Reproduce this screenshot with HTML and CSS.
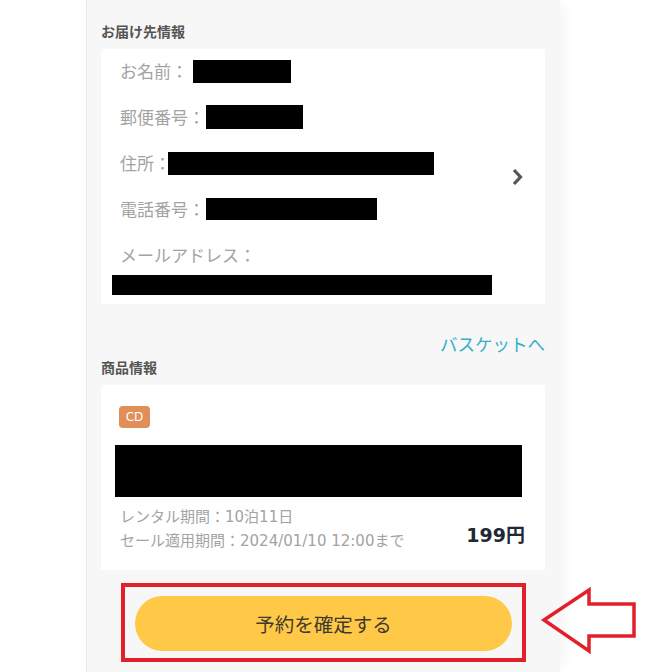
FILE: index.html
```html
<!DOCTYPE html>
<html lang="ja">
<head>
<meta charset="utf-8">
<link rel="stylesheet" href="styles.css">
</head>
<body>
<div class="page">
  <h2 class="section-title">お届け先情報</h2>
  <div class="card address-card">
    <div class="rows">
      <div class="row"><span class="label">お名前：</span><span class="mask mask-name"></span></div>
      <div class="row"><span class="label">郵便番号：</span><span class="mask mask-zip"></span></div>
      <div class="row"><span class="label">住所：</span><span class="mask mask-addr"></span></div>
      <div class="row"><span class="label">電話番号：</span><span class="mask mask-tel"></span></div>
      <div class="row"><span class="label">メールアドレス：</span></div>
      <div class="mask mask-mail"></div>
    </div>
    <svg class="chevron" width="11" height="18" viewBox="0 0 11 18"><path d="M2 2 L8.5 9 L2 16" fill="none" stroke="#555" stroke-width="3.2"/></svg>
  </div>
  <div class="basket-link-wrap"><a class="basket-link" href="#">バスケットへ</a></div>
  <h2 class="section-title title-goods">商品情報</h2>
  <div class="card goods-card">
    <span class="badge">CD</span>
    <div class="mask mask-title"></div>
    <div class="goods-foot">
      <div class="goods-meta">
        <div>レンタル期間：10泊11日</div>
        <div>セール適用期間：2024/01/10 12:00まで</div>
      </div>
      <div class="price">199円</div>
    </div>
  </div>
  <div class="confirm-box">
    <button class="confirm-btn">予約を確定する</button>
    <svg class="arrow" width="100" height="72" viewBox="0 0 100 72"><polygon points="4,36 49,6 49,20 94,20 94,52 49,52 49,67" fill="none" stroke="#e2202b" stroke-width="3.5" stroke-linejoin="miter"/></svg>
  </div>
</div>
</body>
</html>
```
FILE: styles.css
```css
html, body {
  margin: 0;
  padding: 0;
  background: #ffffff;
}
body {
  font-family: "Noto Sans CJK JP", "Noto Sans", sans-serif;
  overflow: hidden;
}
.page {
  box-sizing: border-box;
  margin-left: 86px;
  width: 474px;
  min-height: 672px;
  background: #f7f7f7;
  border-left: 1px solid #e9e9e9;
  padding: 0 15px 0 14px;
  box-shadow: 10px 0 10px -4px rgba(0, 0, 0, 0.035), -6px 0 8px -4px rgba(0, 0, 0, 0.02);
}
.section-title {
  margin: 0;
  padding-top: 22px;
  font-size: 14px;
  line-height: 18px;
  font-weight: bold;
  color: #555555;
}
.card {
  background: #ffffff;
  margin-top: 9px;
}
.address-card {
  box-sizing: border-box;
  height: 255px;
  display: flex;
  align-items: center;
  justify-content: space-between;
  padding: 10px 22px 9px 19px;
}
.rows {
  display: flex;
  flex-direction: column;
  gap: 22px;
  align-self: flex-start;
}
.row {
  display: flex;
  align-items: center;
  height: 24px;
  font-size: 17px;
  line-height: 24px;
  color: #a3a3a3;
  white-space: nowrap;
}
.mask {
  display: block;
  background: #000000;
}
.mask-name { width: 98px; height: 23px; margin-left: 5px; }
.mask-zip { width: 97px; height: 24px; margin-left: 1px; }
.mask-addr { width: 266px; height: 23px; margin-left: -3px; }
.mask-tel { width: 171px; height: 22px; margin-left: 1px; }
.mask-mail { width: 380px; height: 20px; margin-left: -8px; margin-top: -14px; }
.chevron {
  display: block;
  flex: none;
}
.basket-link-wrap {
  text-align: right;
  margin-top: 28px;
  line-height: 24px;
  height: 24px;
}
.basket-link {
  font-size: 17.5px;
  color: #38afc9;
  text-decoration: none;
}
.title-goods {
  padding-top: 2px;
}
.goods-card {
  box-sizing: border-box;
  height: 185px;
  padding: 21px 20px 17px 14px;
}
.badge {
  display: inline-block;
  margin-left: 4px;
  width: 31px;
  height: 22px;
  line-height: 22px;
  text-align: center;
  border-radius: 4px;
  background: #df8f57;
  color: #ffffff;
  font-family: "DejaVu Sans", "Noto Sans", sans-serif;
  font-size: 12px;
  vertical-align: top;
}
.mask-title {
  width: 407px;
  height: 52px;
  margin-top: 15px;
}
.goods-foot {
  display: flex;
  justify-content: space-between;
  align-items: flex-end;
  margin-top: 8px;
  padding-left: 5px;
}
.goods-meta {
  font-family: "DejaVu Sans", "Noto Sans CJK JP", sans-serif;
  font-size: 15px;
  line-height: 24px;
  color: #a3a3a3;
  white-space: nowrap;
}
.price {
  font-family: "DejaVu Sans", "Noto Sans CJK JP", sans-serif;
  font-size: 19px;
  line-height: 28px;
  font-weight: bold;
  color: #1f2835;
  margin-bottom: 4px;
}
.confirm-box {
  position: relative;
  box-sizing: border-box;
  margin: 13px 19px 0 20px;
  height: 79px;
  border: 4px solid #e2202b;
  padding: 9px 10px 7px 10px;
}
.confirm-btn {
  display: block;
  width: 100%;
  height: 55px;
  border: none;
  border-radius: 28px;
  background: #ffc947;
  color: #3f3a30;
  font-family: "Noto Sans CJK JP", "Noto Sans", sans-serif;
  font-size: 19.5px;
  padding: 0;
  cursor: pointer;
}
.arrow {
  position: absolute;
  left: 415px;
  top: -3px;
}
```
